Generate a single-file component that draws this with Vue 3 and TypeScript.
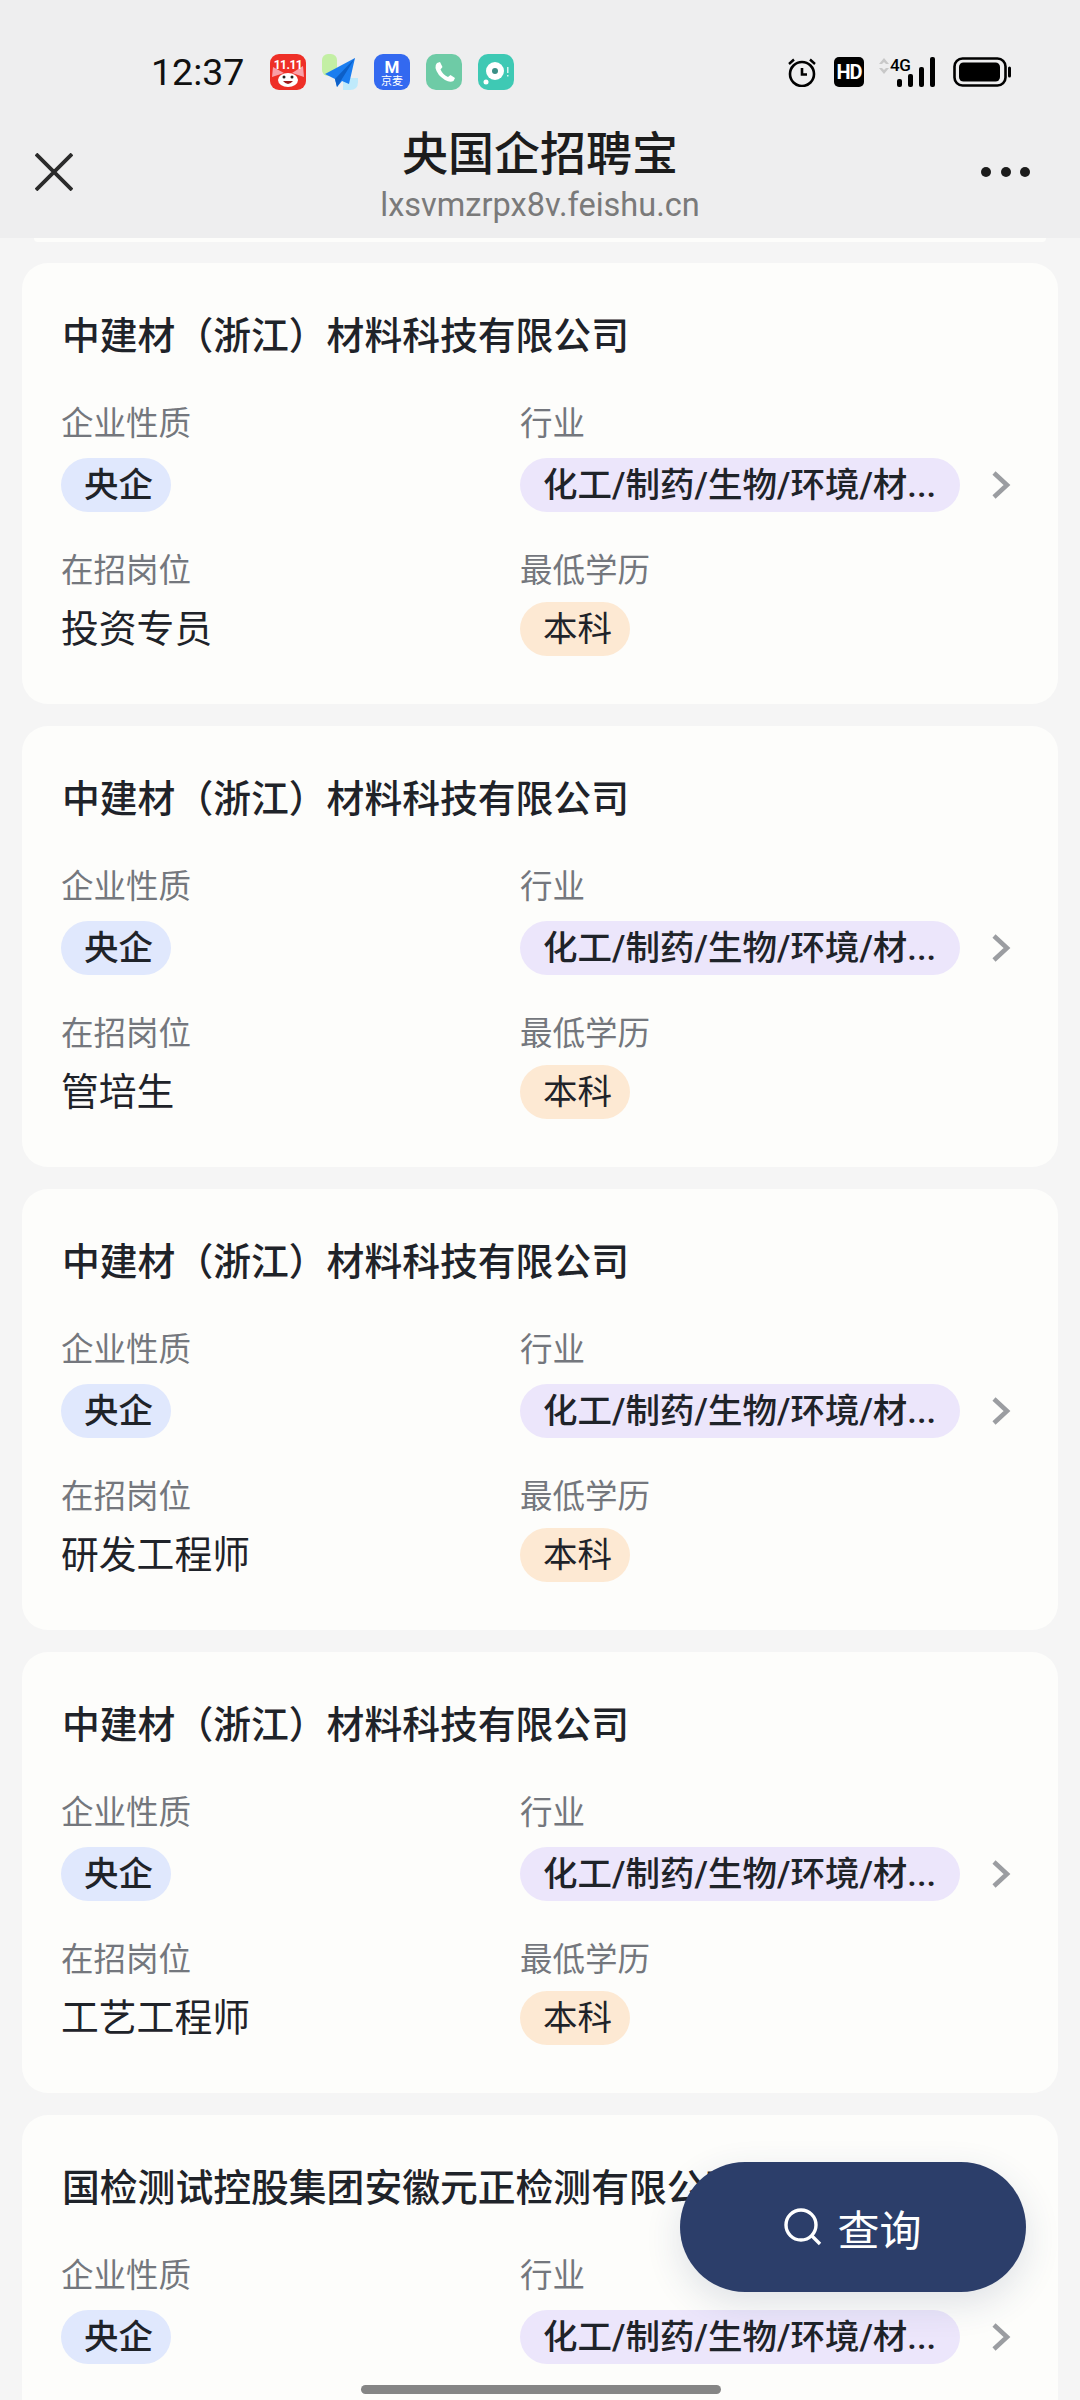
<template>
  <div class="screen">
    <header class="topbar">
      <div class="status">
        <span class="time">12:37</span>
        <div class="app-icons">
          <svg class="app" viewBox="0 0 36 36">
            <rect width="36" height="36" rx="9" fill="#ee2f27" />
            <path d="M3 13 L14 19 L2 23 Z M33 12 L22 19 L34 23 Z" fill="#f9a0a8" />
            <text x="18" y="15" class="app-text eleven">11.11</text>
            <ellipse cx="18" cy="26" rx="10" ry="7" fill="#fff" />
            <path d="M13 27 Q18 33 23 27 Z" fill="#9c1a1a" />
            <circle cx="14" cy="23" r="1.500" fill="#222" />
            <circle cx="22" cy="23" r="1.500" fill="#222" />
          </svg>
          <svg class="app" viewBox="0 0 36 36">
            <rect width="15" height="22" rx="6" fill="#c3efa4" />
            <path d="M21 24 H36 V28 Q36 36 28 36 H21 Z" fill="#bfeafb" />
            <path d="M33 4 L3 20 L13 25 L15 33 L20 27 L27 30 Z" fill="#1a7df0" />
            <path d="M33 4 L13 25 L15 33 Z" fill="#0c5fc7" />
          </svg>
          <svg class="app" viewBox="0 0 36 36">
            <rect width="36" height="36" rx="9" fill="#3369f0" />
            <text x="18" y="19" class="app-text m">M</text>
            <text x="18" y="31" class="app-text jm">京麦</text>
          </svg>
          <svg class="app" viewBox="0 0 36 36">
            <rect width="36" height="36" rx="10" fill="#6ecba6" />
            <path d="M11 9 L14 8 L16.500 13 L14.500 15.500 Q17 21 22 23 L24.500 21 L29 24 L27.500 27 Q24 29 19 26 Q11 21 9.500 14 Q9 11 11 9 Z" fill="#fff" />
          </svg>
          <svg class="app" viewBox="0 0 36 36">
            <rect width="36" height="36" rx="10" fill="#3ec9b4" />
            <circle cx="17" cy="17" r="9" fill="#fff" />
            <circle cx="17" cy="17" r="3" fill="#3a8f86" />
            <circle cx="8" cy="28" r="2.500" fill="#fff" />
            <rect x="29" y="13" width="1.500" height="6" fill="#d6f5ef" />
            <rect x="29" y="21" width="1.500" height="1.500" fill="#d6f5ef" />
          </svg>
        </div>
        <div class="sys-icons">
          <svg class="alarm" viewBox="0 0 30 30" fill="none" stroke="#000">
            <circle cx="15" cy="17" r="12" stroke-width="2.600" />
            <path d="M15 11 V17.500 H20" stroke-width="2.600" />
            <path d="M2 7 L7 2.500 M28 7 L23 2.500" stroke-width="2.400" />
          </svg>
          <span class="hd">HD</span>
          <div class="net">
            <svg class="updown" viewBox="0 0 10 16"><path d="M5 0 L10 6 H7 L5 4 L3 6 H0 Z M5 16 L0 10 H3 L5 12 L7 10 H10 Z" fill="#c8c8c8" /></svg>
            <span class="four-g">4G</span>
            <svg class="bars" viewBox="0 0 38 30">
              <rect x="0" y="22" width="5" height="8" rx="2" />
              <rect x="11" y="17" width="5" height="13" rx="2" />
              <rect x="22" y="10" width="5" height="20" rx="2" />
              <rect x="33" y="0" width="5" height="30" rx="2" />
            </svg>
          </div>
          <svg class="battery" viewBox="0 0 58 30">
            <rect x="1.500" y="1.500" width="51" height="27" rx="8" fill="none" stroke="#000" stroke-width="2.600" />
            <rect x="6" y="5.500" width="41" height="19" rx="4.500" />
            <rect x="55" y="9.500" width="3" height="11" rx="1.500" />
          </svg>
        </div>
      </div>
      <div class="navbar">
        <svg class="close" viewBox="0 0 38 38" fill="none" stroke="#2b2b2b" stroke-width="3.800">
          <path d="M1 1 L37 37 M37 1 L1 37" />
        </svg>
        <div class="heading">
          <div class="app-title">央国企招聘宝</div>
          <div class="app-url">lxsvmzrpx8v.feishu.cn</div>
        </div>
        <div class="more"><i /><i /><i /></div>
      </div>
    </header>

    <main class="list">
      <div class="prev-edge" />
      <section v-for="(item, i) in companies" :key="i" class="card">
        <h2 class="name">{{ item.name }}</h2>
        <div class="fields">
          <div class="field">
            <div class="label">企业性质</div>
            <span class="tag blue">央企</span>
          </div>
          <div class="field">
            <div class="label">行业</div>
            <div class="tag-row">
              <span class="tag purple industry">{{ industry }}</span>
              <svg class="chevron" viewBox="0 0 20 30" fill="none" stroke="#9b9da1" stroke-width="4.600">
                <path d="M3 3 L16 15 L3 27" />
              </svg>
            </div>
          </div>
          <template v-if="item.job">
            <div class="field lower">
              <div class="label">在招岗位</div>
              <div class="value">{{ item.job }}</div>
            </div>
            <div class="field lower">
              <div class="label">最低学历</div>
              <span class="tag orange">本科</span>
            </div>
          </template>
        </div>
      </section>
    </main>

    <button class="query">
      <svg class="search" viewBox="0 0 38 38" fill="none" stroke="#fff" stroke-width="3.400">
        <circle cx="17" cy="17" r="15" />
        <path d="M27.500 27.500 L36 36" />
      </svg>
      <span>查询</span>
    </button>
    <div class="home-bar" />
  </div>
</template>

<script setup lang="ts">
interface Company {
  name: string
  job?: string
}

// the reference only ever shows the truncated label
const industry = '化工/制药/生物/环境/材...'

const companies: Company[] = [
  { name: '中建材（浙江）材料科技有限公司', job: '投资专员' },
  { name: '中建材（浙江）材料科技有限公司', job: '管培生' },
  { name: '中建材（浙江）材料科技有限公司', job: '研发工程师' },
  { name: '中建材（浙江）材料科技有限公司', job: '工艺工程师' },
  { name: '国检测试控股集团安徽元正检测有限公司' },
]
</script>

<style>
html,
body {
  background: #f5f5f5;
}
</style>

<style scoped>
.screen {
  position: relative;
  width: 1080px;
  height: 2400px;
  overflow: hidden;
  background: #f5f5f5;
  color: #1f2329;
  font-family: Roboto, 'Noto Sans CJK SC', sans-serif;
}

.topbar {
  height: 238px;
  background: #eeeeef;
}

.status {
  display: flex;
  align-items: center;
  height: 30px;
  padding: 57px 69px 0 151px;
}

.time {
  width: 119px;
  font-size: 37.500px;
  line-height: 30px;
  color: #111;
}

.app-icons {
  display: flex;
  gap: 16px;
}

.app {
  display: block;
  width: 36px;
  height: 36px;
}

.app-text {
  text-anchor: middle;
  fill: #fff;
  font-family: Roboto, 'Noto Sans CJK SC', sans-serif;
}

.eleven {
  font-size: 12px;
  font-weight: 700;
  letter-spacing: -0.5px;
}

.m {
  font-size: 17px;
  font-weight: 700;
}

.jm {
  font-size: 11px;
}

.sys-icons {
  display: flex;
  align-items: center;
  margin-left: auto;
}

.alarm {
  width: 30px;
  height: 30px;
}

.hd {
  width: 30px;
  height: 30px;
  margin-left: 17px;
  border-radius: 5px;
  background: #000;
  color: #fff;
  font-size: 20px;
  font-weight: 700;
  line-height: 30px;
  letter-spacing: -1px;
  text-align: center;
}

.net {
  position: relative;
  width: 56px;
  height: 30px;
  margin-left: 15px;
}

.updown {
  position: absolute;
  left: 0;
  top: 1px;
  width: 10px;
  height: 16px;
}

.four-g {
  position: absolute;
  left: 11px;
  top: -2px;
  font-size: 17px;
  font-weight: 500;
  line-height: 20px;
  letter-spacing: -0.5px;
  color: #000;
}

.bars {
  position: absolute;
  right: 0;
  top: 0;
  width: 38px;
  height: 30px;
}

.battery {
  width: 58px;
  height: 30px;
  margin-left: 18px;
}

.navbar {
  position: relative;
  display: flex;
  justify-content: center;
  padding-top: 39px;
}

.close {
  position: absolute;
  left: 35px;
  top: 66px;
  width: 38px;
  height: 38px;
}

.heading {
  text-align: center;
}

.app-title {
  font-size: 46px;
  font-weight: 500;
  line-height: 56px;
  color: #1c1c1c;
}

.app-url {
  margin-top: 3px;
  font-size: 32.500px;
  line-height: 40px;
  color: #7a7a7a;
}

.more {
  position: absolute;
  left: 981px;
  top: 80px;
  display: flex;
  gap: 9.500px;
}

.more i {
  width: 10px;
  height: 10px;
  border-radius: 50%;
  background: #1c1c1c;
}

.list {
  display: flex;
  flex-direction: column;
  gap: 22px;
  padding: 0 22px;
}

.prev-edge {
  height: 4px;
  margin: 0 12px -1px;
  border-radius: 0 0 12px 12px;
  background: #fdfdfb;
}

.card {
  flex: none;
  height: 441px;
  padding: 51px 24px 0 39px;
  border-radius: 26px;
  background: #fdfdfb;
  box-sizing: border-box;
}

.name {
  margin: 0 0 0 1px;
  font-size: 37.800px;
  font-weight: 500;
  line-height: 44px;
  white-space: nowrap;
}

.fields {
  display: grid;
  grid-template-columns: 459px 1fr;
  row-gap: 37px;
  margin-top: 44px;
}

.field {
  min-width: 0;
}

.label {
  margin-bottom: 12px;
  font-size: 32.500px;
  line-height: 44px;
  color: #74777d;
}

.lower .label {
  margin-bottom: 9px;
}

.tag {
  display: inline-block;
  height: 54px;
  padding: 0 18px 0 23px;
  border-radius: 27px;
  font-size: 34.500px;
  font-weight: 500;
  line-height: 54px;
  box-sizing: border-box;
  vertical-align: top;
}

.blue {
  background: #e0e8fd;
}

.purple {
  background: #ece6fb;
}

.orange {
  background: #fde9d3;
  font-weight: 400;
}

.tag-row {
  display: flex;
  align-items: center;
}

.industry {
  width: 440px;
  white-space: nowrap;
}

.chevron {
  flex: none;
  width: 20px;
  height: 30px;
  margin-left: 31px;
}

.value {
  font-size: 37.800px;
  line-height: 54px;
}

.query {
  position: absolute;
  left: 680px;
  top: 2162px;
  display: flex;
  align-items: center;
  justify-content: center;
  gap: 15px;
  width: 346px;
  height: 130px;
  border: 0;
  border-radius: 65px;
  background: #2c3e6a;
  box-shadow: 0 12px 36px rgba(44, 62, 106, 0.14);
  color: #fff;
  font-family: inherit;
  font-size: 42px;
}

.search {
  width: 38px;
  height: 38px;
}

.home-bar {
  position: absolute;
  left: 361px;
  top: 2385px;
  width: 360px;
  height: 9px;
  border-radius: 5px;
  background: #858585;
}
</style>
